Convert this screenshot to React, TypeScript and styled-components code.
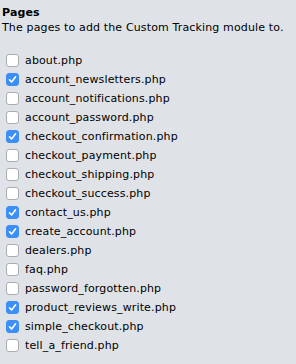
import React from "react";
import styled, { createGlobalStyle } from "styled-components";

const Global = createGlobalStyle`
  html, body { margin: 0; padding: 0; background: #dfe3e8; }
  body { font-family: "DejaVu Sans", Verdana, sans-serif; font-size: 11px; color: #000; letter-spacing: 0.14px; }
`;

const Panel = styled.div`
  padding: 5px 2px 0 2px;
`;

const Title = styled.div`
  font-weight: bold;
  font-size: 11px;
  line-height: 15px;
`;

const Desc = styled.div`
  line-height: 15px;
  margin-bottom: 16px;
`;

const List = styled.div`
  display: flex;
  flex-direction: column;
`;

const Row = styled.label`
  display: flex;
  align-items: center;
  height: 19px;
`;

const Box = styled.span<{ $checked: boolean }>`
  box-sizing: border-box;
  width: 13px;
  height: 13px;
  margin: 3px 6px 3px 4px;
  border-radius: 3px;
  display: flex;
  align-items: center;
  justify-content: center;
  background: ${(p) => (p.$checked ? "#3c8ff7" : "#ffffff")};
  border: 1px solid ${(p) => (p.$checked ? "#3c8ff7" : "#a9acb0")};
`;

const Text = styled.span`
  line-height: 19px;
`;

const pages: [string, boolean][] = [
  ["about.php", false],
  ["account_newsletters.php", true],
  ["account_notifications.php", false],
  ["account_password.php", false],
  ["checkout_confirmation.php", true],
  ["checkout_payment.php", false],
  ["checkout_shipping.php", false],
  ["checkout_success.php", false],
  ["contact_us.php", true],
  ["create_account.php", true],
  ["dealers.php", false],
  ["faq.php", false],
  ["password_forgotten.php", false],
  ["product_reviews_write.php", true],
  ["simple_checkout.php", true],
  ["tell_a_friend.php", false],
];

export default function App() {
  return (
    <>
      <Global />
      <Panel>
        <Title>Pages</Title>
        <Desc>The pages to add the Custom Tracking module to.</Desc>
        <List>
          {pages.map(([name, checked]) => (
            <Row key={name}>
              <Box $checked={checked}>
                {checked && (
                  <svg width="9" height="9" viewBox="0 0 9 9">
                    <path d="M1.5 4.8 L3.6 7 L7.6 1.8" fill="none" stroke="#fff" strokeWidth="1.6" strokeLinecap="round" strokeLinejoin="round" />
                  </svg>
                )}
              </Box>
              <Text>{name}</Text>
            </Row>
          ))}
        </List>
      </Panel>
    </>
  );
}
